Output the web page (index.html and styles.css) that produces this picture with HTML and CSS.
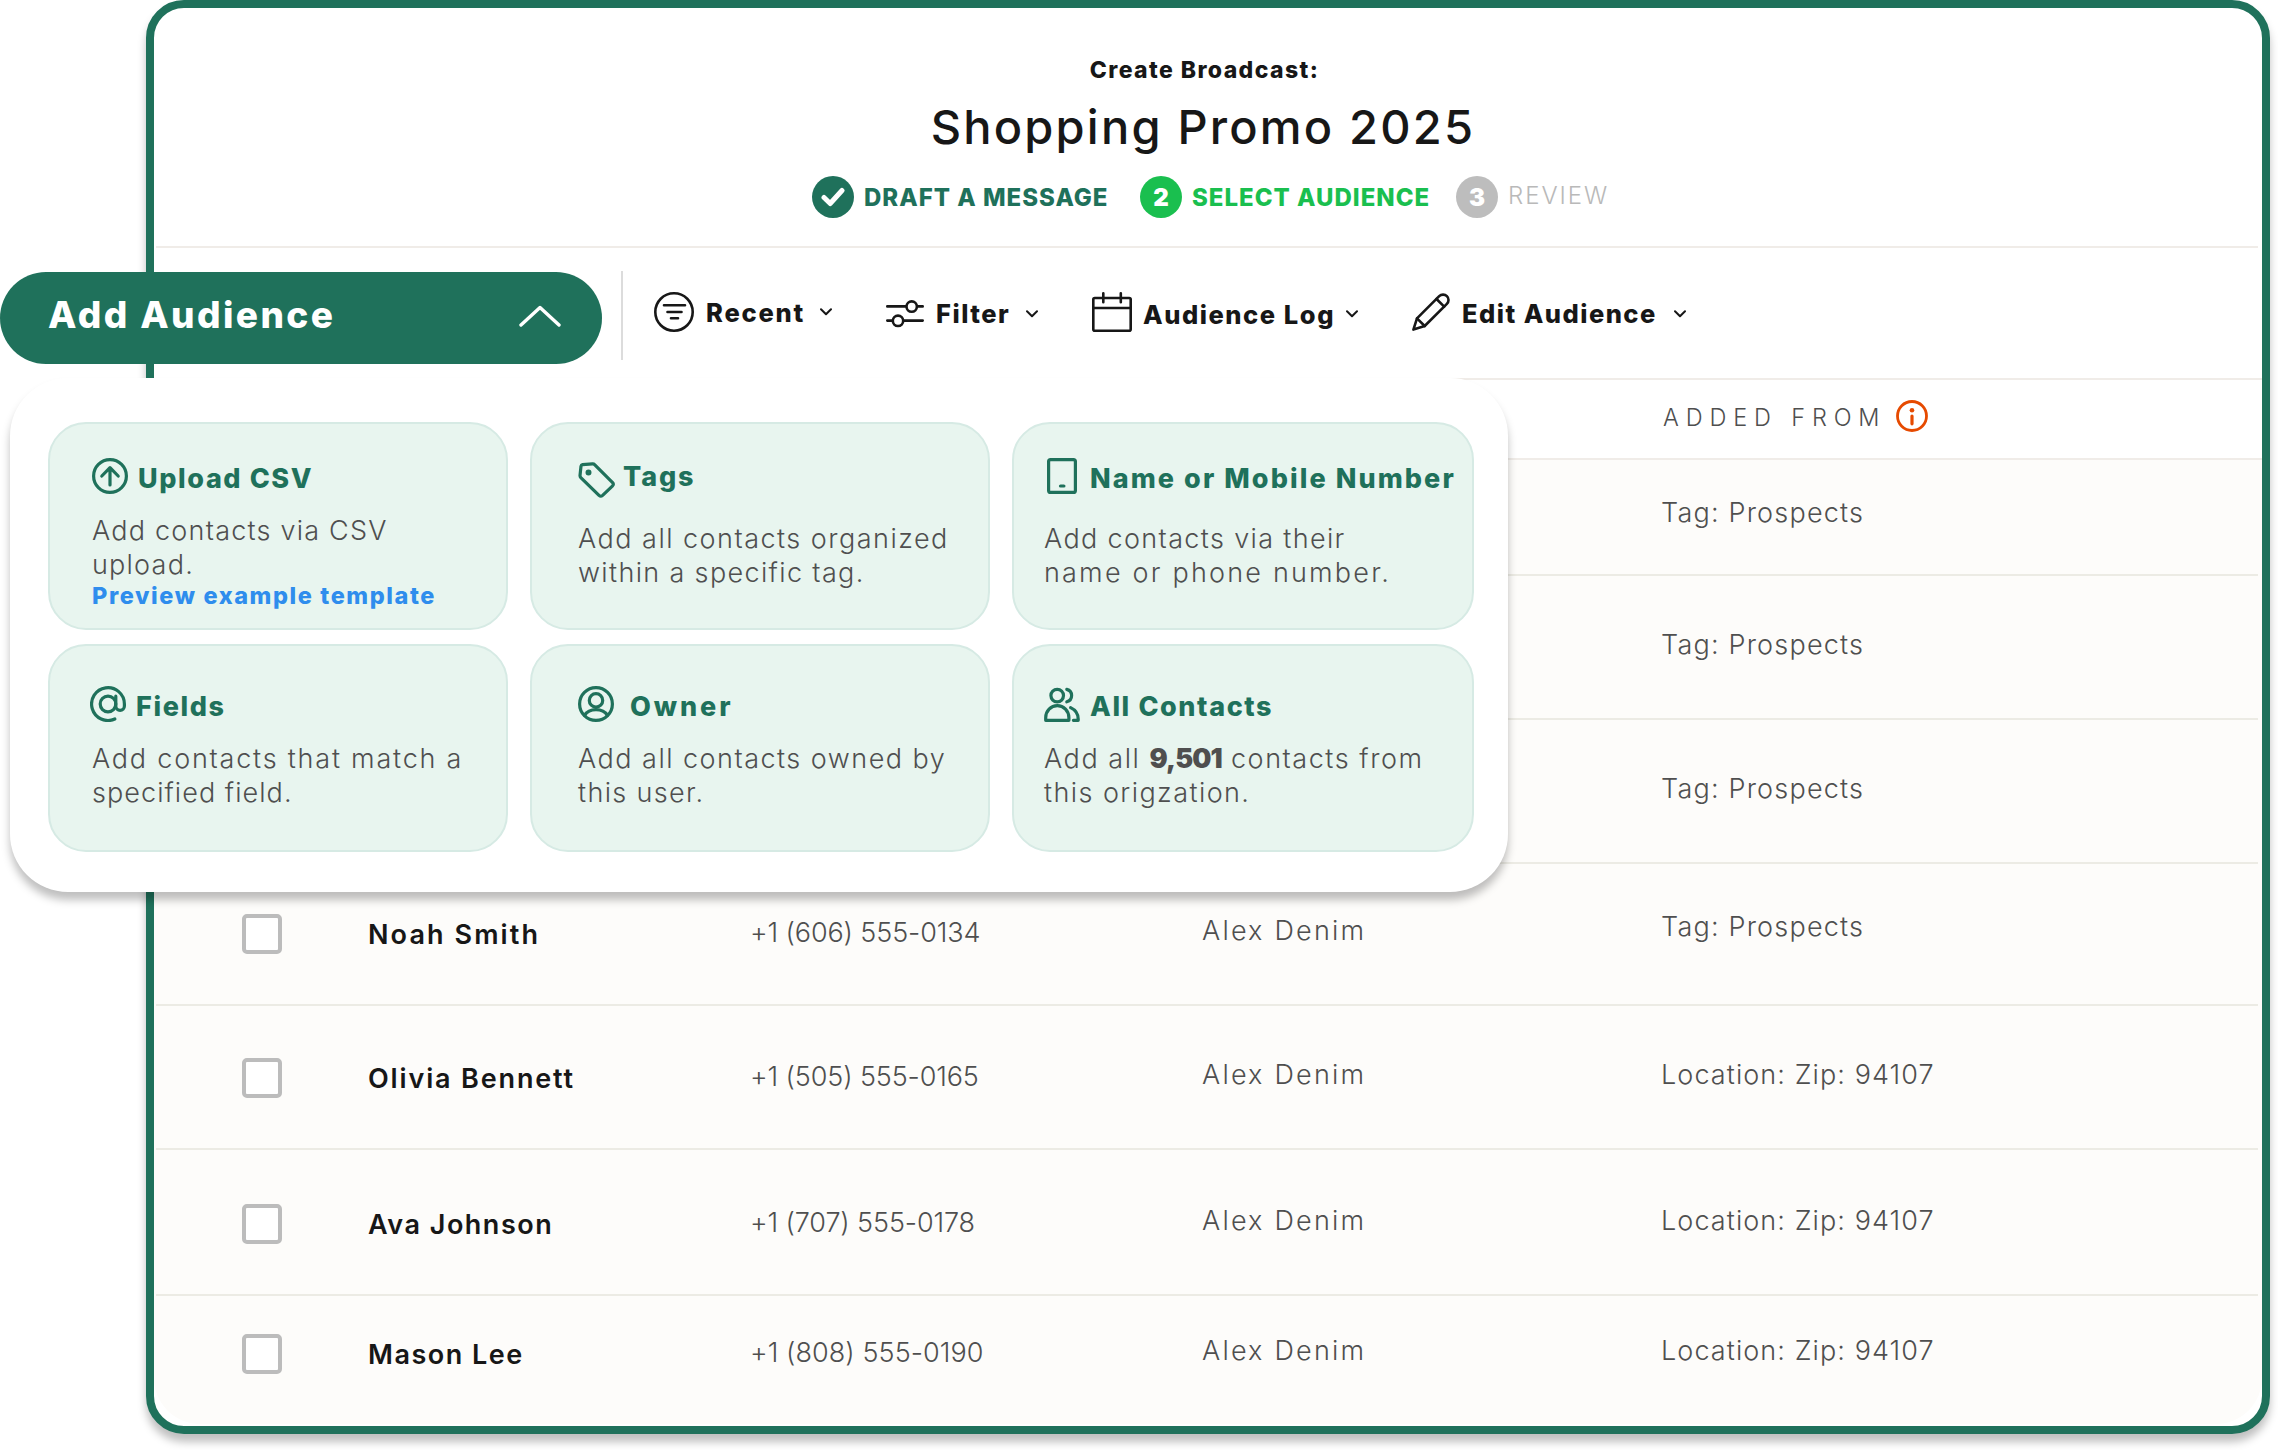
FILE: index.html
```
<!DOCTYPE html>
<html lang="en">
<head>
    <meta charset="UTF-8">
    <meta name="viewport" content="width=device-width, initial-scale=1.0">
    <title>Create Broadcast</title>
    <link rel="stylesheet" href="styles.css">
</head>
<body>
    <div class="frame">
        <header class="header">
            <div class="subtitle">Create Broadcast:</div>
            <h1>Shopping Promo 2025</h1>
            <div class="steps">
                <div class="step done">
                    <span class="step-dot">
                        <svg width="24" height="20" viewBox="0 0 24 20"><path d="M3 10.5l6.2 6L21 3.5" fill="none" stroke="#fff" stroke-width="5" stroke-linecap="round" stroke-linejoin="round"/></svg>
                    </span>
                    <span class="step-label">DRAFT A MESSAGE</span>
                </div>
                <div class="step active">
                    <span class="step-dot">2</span>
                    <span class="step-label">SELECT AUDIENCE</span>
                </div>
                <div class="step">
                    <span class="step-dot">3</span>
                    <span class="step-label">REVIEW</span>
                </div>
            </div>
        </header>

        <nav class="toolbar">
            <div class="divider"></div>
            <div class="tool recent">
                <svg width="40" height="40" viewBox="0 0 40 40" class="line-icon"><circle cx="20" cy="20" r="18.7"/><path d="M10 13.3h21M13.5 20h14M17 26.3h7"/></svg>
                <span class="tool-label">Recent</span>
                <svg width="12" height="8" viewBox="0 0 12 8" class="caret"><path d="M1 1.2l5 5 5-5"/></svg>
            </div>
            <div class="tool filter">
                <svg width="38" height="28" viewBox="0 0 38 28" class="line-icon"><path d="M1.3 6.4h18.5M31.5 6.4h5.2M1.3 20.6h5M17.8 20.6h18.9"/><circle cx="25.7" cy="6.6" r="5.2"/><circle cx="12" cy="20.8" r="5.2"/></svg>
                <span class="tool-label">Filter</span>
                <svg width="12" height="8" viewBox="0 0 12 8" class="caret"><path d="M1 1.2l5 5 5-5"/></svg>
            </div>
            <div class="tool log">
                <svg width="40" height="40" viewBox="0 0 40 40" class="line-icon"><rect x="1.3" y="6" width="37.4" height="32.7" rx="1.5"/><path d="M1.3 16h37.4M11.3 1.3v9M28.8 1.3v9"/></svg>
                <span class="tool-label">Audience Log</span>
                <svg width="12" height="8" viewBox="0 0 12 8" class="caret"><path d="M1 1.2l5 5 5-5"/></svg>
            </div>
            <div class="tool edit">
                <svg width="38" height="38" viewBox="0 0 38 38" class="line-icon"><path d="M1.4 36.6L5 25.4 27.2 3.2a5.4 5.4 0 0 1 7.7 0 5.4 5.4 0 0 1 0 7.7L12.7 33z"/><path d="M24.5 6l7.7 7.7M5 25.4l7.7 7.6"/></svg>
                <span class="tool-label">Edit Audience</span>
                <svg width="12" height="8" viewBox="0 0 12 8" class="caret"><path d="M1 1.2l5 5 5-5"/></svg>
            </div>
        </nav>

        <div class="table-head">
            <span class="from-title">ADDED FROM</span>
            <svg width="32" height="32" viewBox="0 0 32 32"><circle cx="16" cy="16" r="14.5" fill="none" stroke="#e64a00" stroke-width="2.8"/><circle cx="16" cy="10.3" r="2.3" fill="#e64a00"/><path d="M16 16v7.8" stroke="#e64a00" stroke-width="3.2" stroke-linecap="round"/></svg>
        </div>

        <main class="rows">
            <div class="row row-1">
                <span class="from tag">Tag: Prospects</span>
            </div>
            <div class="row row-2">
                <span class="from tag">Tag: Prospects</span>
            </div>
            <div class="row row-3">
                <span class="from tag">Tag: Prospects</span>
            </div>
            <div class="row row-4">
                <span class="checkbox"></span>
                <span class="name noah">Noah Smith</span>
                <span class="phone">+1 (606) 555-0134</span>
                <span class="owner">Alex Denim</span>
                <span class="from tag">Tag: Prospects</span>
            </div>
            <div class="row row-5">
                <span class="checkbox"></span>
                <span class="name olivia">Olivia Bennett</span>
                <span class="phone">+1 (505) 555-0165</span>
                <span class="owner">Alex Denim</span>
                <span class="from">Location: Zip: 94107</span>
            </div>
            <div class="row row-6">
                <span class="checkbox"></span>
                <span class="name">Ava Johnson</span>
                <span class="phone">+1 (707) 555-0178</span>
                <span class="owner">Alex Denim</span>
                <span class="from">Location: Zip: 94107</span>
            </div>
            <div class="row row-7">
                <span class="checkbox"></span>
                <span class="name">Mason Lee</span>
                <span class="phone wide">+1 (808) 555-0190</span>
                <span class="owner">Alex Denim</span>
                <span class="from">Location: Zip: 94107</span>
            </div>
        </main>
    </div>

    <button class="add-audience">
        <span>Add Audience</span>
        <svg width="42" height="22" viewBox="0 0 42 22"><path d="M2 20L21 2.5 40 20" fill="none" stroke="#fff" stroke-width="3.4" stroke-linecap="round" stroke-linejoin="round"/></svg>
    </button>

    <div class="panel">
        <div class="card upload">
            <div class="card-head">
                <svg width="36" height="36" viewBox="0 0 36 36" class="card-icon"><circle cx="18" cy="18" r="16.4"/><path d="M18 27V10M9.8 18L18 9.6l8.2 8.4"/></svg>
                <span class="card-title">Upload CSV</span>
            </div>
            <p><span class="ls-11">Add contacts via CSV</span><span class="ls-11">upload.</span></p>
            <a class="preview">Preview example template</a>
        </div>
        <div class="card tags">
            <div class="card-head">
                <svg width="38" height="36" viewBox="0 0 38 36" class="card-icon"><path d="M14.5 1.8L4.5 2.6Q3.2 2.8 3 4.2L2 13.6Q2 14.8 2.8 15.6L21 33.4Q22.8 35 24.6 33.4L34.6 23.8Q36 22.2 34.6 20.6L16.6 2.6Q15.8 1.7 14.5 1.8z"/><circle cx="10.5" cy="10.4" r="1.4"/></svg>
                <span class="card-title">Tags</span>
            </div>
            <p><span class="ls-14">Add all contacts organized</span><span class="ls-12">within a specific tag.</span></p>
        </div>
        <div class="card mobile">
            <div class="card-head">
                <svg width="36" height="36" viewBox="0 0 36 36" class="card-icon"><rect x="4.6" y="1.6" width="26.8" height="32.8" rx="2"/><path d="M16.5 28h3.4"/></svg>
                <span class="card-title">Name or Mobile Number</span>
            </div>
            <p><span class="ls-12">Add contacts via their</span><span class="ls-21">name or phone number.</span></p>
        </div>
        <div class="card second fields">
            <div class="card-head">
                <svg width="36" height="36" viewBox="0 0 36 36" class="card-icon"><circle cx="18" cy="18" r="7.8"/><path d="M25.8 10.2V20a4.3 4.3 0 0 0 8.6 0v-2a16.4 16.4 0 1 0-9.6 15"/></svg>
                <span class="card-title">Fields</span>
            </div>
            <p><span class="ls-16">Add contacts that match a</span><span class="ls-09">specified field.</span></p>
        </div>
        <div class="card second user">
            <div class="card-head">
                <svg width="36" height="36" viewBox="0 0 36 36" class="card-icon"><circle cx="18" cy="18" r="16.4"/><circle cx="18" cy="14.4" r="6.7"/><path d="M6.6 29.4a12.6 10 0 0 1 22.8 0"/></svg>
                <span class="card-title">Owner</span>
            </div>
            <p><span class="ls-14">Add all contacts owned by</span><span class="ls-12">this user.</span></p>
        </div>
        <div class="card second all">
            <div class="card-head">
                <svg width="36" height="36" viewBox="0 0 36 36" class="card-icon"><circle cx="13.2" cy="9.6" r="6.3"/><path d="M1.7 34.3v-2.6a11.6 12 0 0 1 23.2 0v2.6zM22.8 3.4a6.4 6.4 0 0 1 0 12.4M26.6 21.6q7.6 3.6 7.6 11.4v1.3h-4.8"/></svg>
                <span class="card-title">All Contacts</span>
            </div>
            <p><span class="ls-15">Add all <b>9,501</b> contacts from</span><span class="ls-13">this origzation.</span></p>
        </div>
    </div>
</body>
</html>
```
FILE: styles.css
```
* {
    margin: 0;
    padding: 0;
    box-sizing: border-box;
}

body {
    width: 2278px;
    height: 1450px;
    background: #fff;
    font-family: Inter, sans-serif;
    color: #171717;
    position: relative;
    overflow: hidden;
    white-space: nowrap;
}

svg {
    display: block;
    flex: none;
}

.frame {
    width: 2124px;
    height: 1434px;
    margin-left: 146px;
    border: 8px solid #1f715b;
    border-radius: 38px;
    background: #fff;
    box-shadow: 0 8px 8px rgba(0, 0, 0, 0.25);
}

/* header */
.header {
    height: 240px;
    margin: 0 4px 0 2px;
    padding-top: 48px;
    border-bottom: 2px solid #f0ece8;
}

.subtitle {
    padding-right: 5px;
    font-size: 23px;
    font-weight: 800;
    line-height: 28px;
    letter-spacing: 1.41px;
    text-align: center;
}

h1 {
    margin-top: 15px;
    padding-right: 8px;
    font-size: 47px;
    font-weight: 500;
    line-height: 56px;
    letter-spacing: 2.2px;
    text-align: center;
}

.steps {
    display: flex;
    margin: 21px 0 0 656px;
}

.step {
    display: flex;
    align-items: center;
    gap: 10px;
    height: 42px;
    font-size: 24px;
    color: #b9b9b9;
}

.step-dot {
    display: flex;
    align-items: center;
    justify-content: center;
    width: 42px;
    height: 42px;
    border-radius: 50%;
    background: #bdbdbd;
    color: #fff;
    font-weight: 900;
}

.step-label {
    font-weight: 300;
    letter-spacing: 1.95px;
    padding-bottom: 3px;
}

.step.done,
.step.active {
    width: 328px;
    color: #1f715b;
}

.step.active {
    width: 316px;
    color: #1abf4f;
}

.done .step-label,
.active .step-label {
    font-weight: 800;
    letter-spacing: 1px;
    padding: 1px 0 0;
}

.done .step-dot {
    background: #1f715b;
}

.active .step-dot {
    background: #1abf4f;
}

/* toolbar */
.toolbar {
    display: flex;
    height: 132px;
    padding: 23px 0 0 467px;
    border-bottom: 2px solid #f0ece8;
}

.divider {
    width: 2px;
    height: 89px;
    margin-right: 31px;
    background: #dcdcdc;
}

.tool {
    display: flex;
    align-items: center;
    gap: 12px;
    height: 40px;
    margin: 21px 54px 0 0;
    font-size: 25.5px;
    font-weight: 800;
    line-height: 32px;
}

.line-icon {
    fill: none;
    stroke: #171717;
    stroke-width: 2.6;
    stroke-linecap: round;
    stroke-linejoin: round;
}

.caret {
    margin-left: auto;
    fill: none;
    stroke: #171717;
    stroke-width: 2;
    stroke-linecap: round;
    stroke-linejoin: round;
}

.tool-label {
    padding-top: 3px;
}

.recent {
    width: 178px;
    letter-spacing: 1.78px;
}

.recent .tool-label {
    padding-top: 2px;
}

.filter {
    width: 152px;
    letter-spacing: 1.49px;
}

.filter .line-icon {
    margin-top: 3px;
}

.log {
    width: 266px;
    gap: 11px;
    letter-spacing: 1.55px;
}

.log .tool-label {
    padding-top: 5px;
}

.log .caret,
.filter .caret,
.edit .caret {
    margin-top: 4px;
}

.edit {
    width: 274px;
    margin-right: 0;
    letter-spacing: 1.47px;
}

/* table */
.table-head {
    display: flex;
    height: 80px;
    padding: 20px 0 0 1509px;
    border-bottom: 2px solid #f0ece8;
    font-size: 23.5px;
    line-height: 36px;
    color: #4f4f4f;
}

.from-title {
    width: 233px;
    font-weight: 350;
    letter-spacing: 6.85px;
}

.rows {
    background: #fdfcfa;
    border-radius: 0 0 46px 46px;
    overflow: hidden;
}

.row {
    display: grid;
    grid-template-columns: 125px 383px 452px 459px 1fr;
    align-items: start;
    height: 144px;
    margin: 0 4px 0 2px;
    padding: 50px 0 0 86px;
    border-bottom: 2px solid #ecebe4;
    font-size: 27px;
    font-weight: 350;
    line-height: 34px;
    color: #4f4f4f;
}

.row-1 {
    height: 116px;
    padding-top: 34px;
}

.row-4 {
    height: 142px;
    padding-top: 48px;
}

.row-6 {
    height: 146px;
    padding-top: 52px;
}

.row-7 {
    height: 128px;
    padding-top: 36px;
    border-bottom: none;
}

.checkbox {
    width: 40px;
    height: 40px;
    margin-top: 2px;
    border: 4px solid #bcbcbc;
    border-radius: 5px;
    background: #fff;
}

.name {
    margin: 6px 0 0 1px;
    color: #171717;
    font-weight: 600;
    letter-spacing: 1.5px;
}

.noah {
    letter-spacing: 2.1px;
}

.olivia {
    letter-spacing: 1.85px;
}

.phone {
    margin-top: 4px;
    letter-spacing: -0.12px;
}

.phone.wide {
    letter-spacing: 0.06px;
}

.owner {
    margin-top: 2px;
    letter-spacing: 2.2px;
}

.from {
    grid-column: 5;
    margin-top: 2px;
    letter-spacing: 1.08px;
}

.from.tag {
    letter-spacing: 1.2px;
}

.row-4 .from {
    margin-top: -2px;
}

/* add audience button and its dropdown */
.add-audience {
    position: absolute;
    top: 272px;
    left: 0;
    display: flex;
    align-items: center;
    justify-content: space-between;
    width: 602px;
    height: 92px;
    padding: 0 41px 4px 48px;
    border: none;
    border-radius: 46px;
    background: #1f715b;
    color: #fff;
    font-family: inherit;
    font-size: 37px;
    font-weight: 800;
    letter-spacing: 2.4px;
}

.add-audience span {
    padding-bottom: 3px;
}

.panel {
    position: absolute;
    top: 378px;
    left: 10px;
    display: grid;
    grid-template-columns: 460px 460px 462px;
    grid-template-rows: 208px 208px;
    gap: 14px 22px;
    width: 1498px;
    height: 514px;
    padding: 44px 34px 0 38px;
    border-radius: 58px;
    background: #fff;
    box-shadow: 0 8px 8px rgba(0, 0, 0, 0.25);
}

.card {
    padding: 34px 0 0 42px;
    border: 2px solid #d6eae4;
    border-radius: 38px;
    background: #e8f5ef;
}

.card.second {
    padding-top: 40px;
}

.card-head {
    display: flex;
    align-items: flex-start;
    gap: 10px;
    height: 36px;
}

.card-icon {
    fill: none;
    stroke: #1f715b;
    stroke-width: 3.2;
    stroke-linecap: round;
    stroke-linejoin: round;
}

.card-title {
    padding-top: 3px;
    font-size: 27px;
    font-weight: 800;
    line-height: 36px;
    letter-spacing: 1.6px;
    color: #1f715b;
}

.card p {
    margin-top: 20px;
    font-size: 27px;
    font-weight: 350;
    line-height: 34px;
    color: #4f4f4f;
}

.card p span {
    display: block;
}

.card b {
    font-weight: 900;
    letter-spacing: -0.9px;
}

.preview {
    display: block;
    margin-top: 1px;
    font-size: 23.5px;
    font-weight: 800;
    line-height: 26px;
    letter-spacing: 1.6px;
    color: #2f8ded;
}

.tags,
.user {
    padding-left: 46px;
}

.tags .card-icon {
    margin-top: 4px;
}

.tags .card-title {
    margin-left: -3px;
    padding-top: 1px;
    letter-spacing: 1.85px;
}

.card.tags p,
.card.mobile p {
    margin-top: 28px;
}

.mobile,
.all {
    padding-left: 30px;
}

.mobile .card-title {
    letter-spacing: 2.08px;
}

.fields .card-head {
    margin-left: -2px;
}

.user .card-head {
    gap: 16px;
}

.user .card-title {
    letter-spacing: 2.9px;
}

.ls-09 { letter-spacing: 1.05px; }
.ls-11 { letter-spacing: 1.22px; }
.ls-12 { letter-spacing: 1.35px; }
.ls-13 { letter-spacing: 1.42px; }
.ls-14 { letter-spacing: 1.48px; }
.ls-15 { letter-spacing: 1.54px; }
.ls-16 { letter-spacing: 1.78px; }
.ls-21 { letter-spacing: 2.2px; }
```
